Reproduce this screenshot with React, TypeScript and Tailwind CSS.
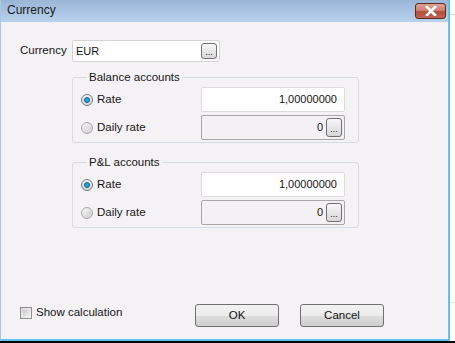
import type { ReactNode } from 'react';

function Radio({ checked }: { checked?: boolean }) {
  if (checked) {
    return (
      <span className="w-[12px] h-[12px] rounded-full border border-[#6f7b84] bg-gradient-to-b from-[#f4f4f4] to-[#d2d6da] flex items-center justify-center shrink-0">
        <span className="w-[6px] h-[6px] rounded-full bg-[#1ea7e1] border border-[#1b5c86]" />
      </span>
    );
  }
  return (
    <span className="w-[12px] h-[12px] rounded-full border border-[#a9a9a9] bg-gradient-to-br from-[#f6f6f6] to-[#cfcfcf] shrink-0" />
  );
}

function DotsButton() {
  return (
    <span className="w-[16px] h-[19px] border border-[#707070] rounded-[3px] bg-gradient-to-b from-[#f7f7f7] to-[#d7d7d7] flex items-end justify-center pb-[3px] text-[9px] leading-[8px] text-[#222] shrink-0">
      ...
    </span>
  );
}

function Group({ title, children }: { title: string; children: ReactNode }) {
  return (
    <fieldset className="ml-[52px] w-[287px] border border-[#d3dce3] rounded-[3px] pt-[3px] pb-[2px] pl-[8px] pr-[12px]">
      <legend className="ml-[6px] px-[2px] leading-[14px] text-[11.5px]">{title}</legend>
      <div className="flex flex-col gap-[3px]">{children}</div>
    </fieldset>
  );
}

function RateRow({ label, checked, value, daily }: { label: string; checked?: boolean; value: string; daily?: boolean }) {
  return (
    <div className="flex items-center">
      <div className="w-[120px] flex items-center gap-[4px]">
        <Radio checked={checked} />
        <span>{label}</span>
      </div>
      {daily ? (
        <div className="w-[144px] h-[25px] border border-[#a7a7a7] rounded-[2px] bg-[#f3f1f3] flex items-center justify-end pr-[2px] gap-[3px] text-[11px]">
          <span>{value}</span>
          <DotsButton />
        </div>
      ) : (
        <div className="w-[144px] h-[25px] border border-[#dcdcdc] rounded-[2px] bg-white flex items-center justify-end pr-[7px] text-[11px]">
          {value}
        </div>
      )}
    </div>
  );
}

function PushButton({ label }: { label: string }) {
  return (
    <button className="w-[84px] h-[23px] border border-[#707070] rounded-[3px] bg-[linear-gradient(#f2f2f2_0%,#ebebeb_50%,#dddddd_51%,#cfcfcf_100%)] text-[11.5px] text-[#111]">
      {label}
    </button>
  );
}

export default function App() {
  return (
    <div className="w-[455px] h-[343px] bg-white flex flex-col font-['Liberation_Sans',Arial,sans-serif] text-[11.5px] text-[#151515] overflow-hidden">
      <div className="flex h-[341px]">
        <div className="w-[450px] flex flex-col border-l border-l-[#a9c6e4] border-r-2 border-r-[#64bfea] border-b-2 border-b-[#5ec2ee]">
          <div className="h-[22px] bg-gradient-to-b from-[#9ab6d7] to-[#b9d1ec] flex items-start justify-between">
            <span className="ml-[6px] mt-[3px] text-[12px] leading-[15px] text-[#1b1b1b]">Currency</span>
            <span className="mt-[3px] mr-[2px] w-[31px] h-[16px] rounded-[3px] border border-[#5b2b22] bg-[linear-gradient(#dba396_0%,#cf8272_45%,#b14c3a_55%,#c1675a_100%)] flex items-center justify-center">
              <svg width="12" height="10" viewBox="0 0 12 10">
                <path d="M2 1 L10 9 M10 1 L2 9" stroke="#ffffff" strokeWidth="2.6" strokeLinecap="square" />
              </svg>
            </span>
          </div>

          <div className="flex-1 bg-[#f5f2f6] flex flex-col pl-[19px] pt-[18px] pb-[12px]">
            <div className="flex items-center">
              <span className="w-[52px]">Currency</span>
              <div className="w-[148px] h-[22px] border border-[#d4d4d4] rounded-[2px] bg-white flex items-center justify-between pl-[3px] pr-[2px]">
                <span className="text-[11px]">EUR</span>
                <span className="w-[16px] h-[16px] border border-[#707070] rounded-[3px] bg-gradient-to-b from-[#f7f7f7] to-[#d7d7d7] flex items-end justify-center pb-[2px] text-[9px] leading-[8px] text-[#222]">
                  ...
                </span>
              </div>
            </div>

            <div className="mt-[8px]">
              <Group title="Balance accounts">
                <RateRow label="Rate" checked value="1,00000000" />
                <RateRow label="Daily rate" value="0" daily />
              </Group>
            </div>

            <div className="mt-[12px]">
              <Group title="P&L accounts">
                <RateRow label="Rate" checked value="1,00000000" />
                <RateRow label="Daily rate" value="0" daily />
              </Group>
            </div>

            <div className="flex-1" />

            <div className="flex items-start h-[23px]">
              <div className="w-[175px] h-[17px] flex items-center gap-[4px] whitespace-nowrap">
                <span className="w-[12px] h-[12px] border border-[#8e8e8e] bg-gradient-to-br from-[#d9d9d9] to-[#f4f4f4] p-[2px] shrink-0">
                  <span className="block w-full h-full bg-gradient-to-br from-[#c9c9c9] to-[#ededed]" />
                </span>
                <span>Show calculation</span>
              </div>
              <div className="flex gap-[21px]">
                <PushButton label="OK" />
                <PushButton label="Cancel" />
              </div>
            </div>
          </div>
        </div>
        <div className="flex-1 flex flex-col">
          <div className="mt-[14px] h-px bg-[#d9d9d9]" />
          <div className="flex-1" />
          <div className="mb-[38px] h-px bg-[#e4e4e4]" />
        </div>
      </div>
      <div className="h-[2px] bg-black" />
    </div>
  );
}
